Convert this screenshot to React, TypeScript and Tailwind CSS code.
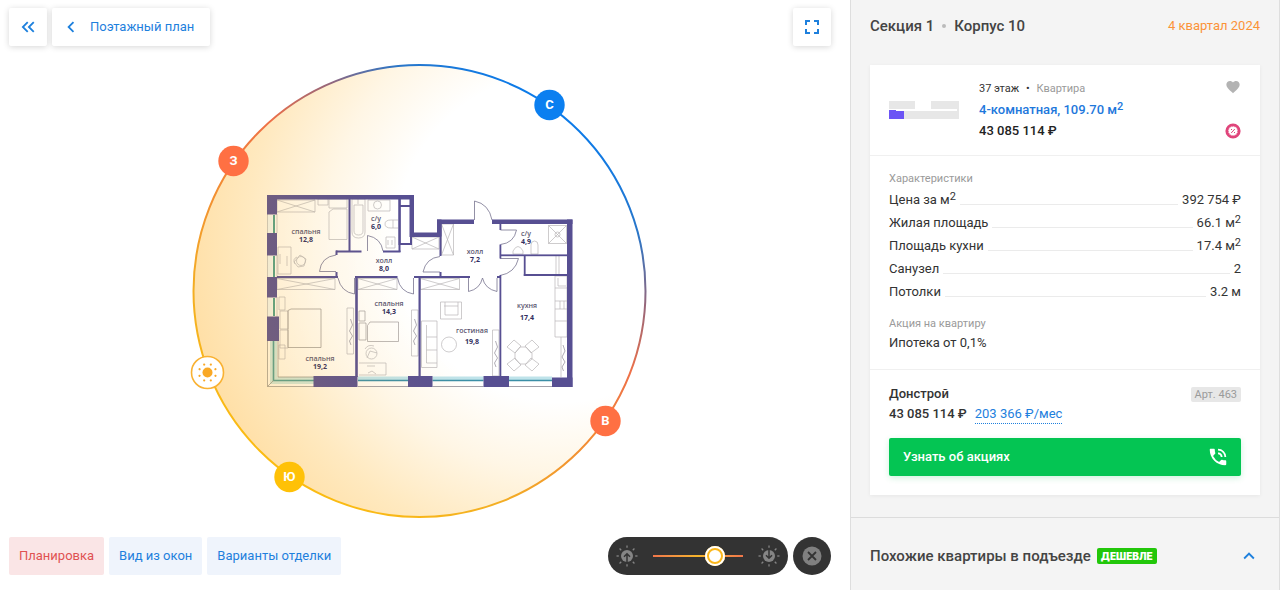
import { useState } from "react";
import {
  MdChevronLeft,
  MdFavorite,
  MdFullscreen,
  MdKeyboardArrowUp,
  MdKeyboardDoubleArrowLeft,
  MdPhoneInTalk,
} from "react-icons/md";

interface Spec {
  label: React.ReactNode;
  value: React.ReactNode;
}

const specs: Spec[] = [
  { label: <>Цена за м<Squared /></>, value: "392 754 ₽" },
  { label: "Жилая площадь", value: <>66.1 м<Squared /></> },
  { label: "Площадь кухни", value: <>17.4 м<Squared /></> },
  { label: "Санузел", value: "2" },
  { label: "Потолки", value: "3.2 м" },
];

const tabs = ["Планировка", "Вид из окон", "Варианты отделки"];

// [x, y, width, height]
const walls: number[][] = [
  // outer contour
  [267, 195, 147, 4.5],
  [267, 195, 10, 19.5],
  [267, 233, 10, 22.5],
  [267, 277, 10, 20.5],
  [267, 316.5, 12, 24.5],
  [409.5, 195, 4.5, 42],
  [410, 232.5, 31, 4.5],
  [437, 219.5, 4.5, 17],
  [437, 219.5, 37, 4.5],
  [492, 219.5, 80.5, 4.5],
  [567, 219.5, 5.5, 167.5],
  [552, 377.5, 20.5, 9.5],
  [313.5, 376, 44, 11],
  [408, 376, 24.5, 11],
  [483.5, 376, 25.5, 11],
  // inner partitions
  [348.5, 199, 2, 53],
  [398.5, 199, 2.2, 46],
  [398.5, 199, 2, 53],
  [400, 205, 10, 2],
  [399, 243, 13, 2],
  [410, 235, 2, 10],
  [336, 250.5, 25.5, 2],
  [383, 250.5, 17.5, 2],
  [335.5, 250.5, 2, 4.5],
  [335.5, 272, 2, 5],
  [277, 276, 61, 2],
  [355, 276, 42.5, 2],
  [355.2, 276, 2.6, 101],
  [418.5, 276, 2.2, 101],
  [414, 276, 56, 2],
  [439.5, 222, 2, 34],
  [439.5, 272, 2, 5],
  [499.5, 222, 1.8, 8],
  [499.5, 244.5, 1.8, 14],
  [499.5, 275, 1.8, 102],
  [497, 276, 4, 2],
  [500, 254.4, 67, 1.8],
  [523.8, 255, 1.8, 21],
  [523.8, 274, 44, 2],
];

// [x, y, width, height]
const wardrobes: number[][] = [
  [277, 200, 38, 12],
  [441.5, 224, 12, 31],
  [412, 237, 27, 12],
  [277, 278.5, 58, 11],
  [358, 278.5, 39, 11],
  [420.5, 278.5, 39, 11],
  [548.5, 225.5, 18, 18],
];

const rooms = [
  { name: "спальня", area: "12,8", x: 306, y: 234 },
  { name: "с/у", area: "6,0", x: 376, y: 221 },
  { name: "холл", area: "8,0", x: 384, y: 263 },
  { name: "спальня", area: "14,3", x: 389, y: 306 },
  { name: "спальня", area: "19,2", x: 320, y: 361 },
  { name: "холл", area: "7,2", x: 475, y: 254 },
  { name: "с/у", area: "4,9", x: 526, y: 236 },
  { name: "кухня", area: "17,4", x: 527, y: 308, gap: 12 },
  { name: "гостиная", area: "19,8", x: 472, y: 333, gap: 11 },
];

const compass = [
  { letter: "С", x: 549.5, y: 105, color: "#0b7ff0" },
  { letter: "З", x: 233.5, y: 161, color: "#ff7043" },
  { letter: "В", x: 605.5, y: 421, color: "#ff7043" },
  { letter: "Ю", x: 289.5, y: 477, color: "#ffc107" },
];

const footprint = "M267 195H414V233H437V220H572V387H267Z";

const rays = [0, 45, 90, 135, 180, 225, 270, 315];

function Squared() {
  return <sup className="top-[-4px] text-[11px] leading-none">2</sup>;
}

function FloorPlan() {
  return (
    <g>
      <path d={footprint} fill="#fff" fillOpacity="0.7" />

      {/* Furniture */}
      <g fill="none" stroke="#b9b6b8" strokeWidth="0.7">
        {wardrobes.map(([x, y, w, h]) => (
          <path
            key={`${x}-${y}`}
            d={`M${x} ${y}h${w}v${h}h${-w}zl${w} ${h}M${x + w} ${y}l${-w} ${h}`}
          />
        ))}
        <path d="M318 199h10v6h-10zM329 199h18v9h-18zM329 212l4-3h14v30.500h-18z" />
        <path d="M352 199h13v33q0 6-6.500 6t-6.500-6zM354 205v26q0 4 4.500 4t4.500-4v-26zM358 199v5" />
        <path d="M368 200h22v11h-22z" />
        <circle cx="377.500" cy="205" r="4" />
        <path d="M398 220h-7q-6 0-6 4t6 4h7M393 220v8M386 237h9v11h-9zM388 240v5M392 240v5" />
        <path d="M278 247h13v27h-13zM280 254v10M287 256v10" />
        <path d="M294 262l6-7 6 4-2 7-6 1zM297 257q-5 2-2 7" />
        <circle cx="301" cy="261" r="4.500" />
        <path d="M279 297h6v13h-6zM279 345h6v14h-6z" />
        <path d="M280 311h8v18h-8zM280 330h8v18h-8z" />
        <path d="M291 309h30v38.500h-33v-37z" stroke="#95908e" />
        <path d="M347 308h6.500v46h-6.500z" />
        <path d="M350.500 319l2 6-3 6 3 5-3 5 1.500 4" stroke="#8f8b96" />
        <path d="M411.500 310h6.500v46h-6.500z" />
        <path d="M414.500 319l2 6-3 6 3 5-3 5 1.500 4" stroke="#8f8b96" />
        <path d="M359 311h6v10h-6zM359 323h7v17h-7zM370 322h28.500v19.500h-31v-16z" stroke="#a09b9b" />
        <circle cx="371.500" cy="353.500" r="5.500" />
        <path d="M365 349q3-5 9-3M367 358l3-7 7 2M359 363h27v12h-27M367 366h8M368 373l4-2 4 3" />
        <path d="M440.500 302h21v17h-21zM445 302v13h13v-13M444 306h14" />
        <path d="M421.500 321h15.500v46.500h-15.500zM426.500 325v38h10.500M426.500 337h10.500M426.500 350h10.500" />
        <circle cx="449" cy="344.500" r="7.500" />
        <path d="M492.500 330h6.500v46h-6.500z" />
        <path d="M495.500 341l2 6-3 6 3 5-3 5 1.500 4" stroke="#8f8b96" />
        <path d="M507 347l7-7 7 6-6 7zM539 347l-7-7-7 6 6 7zM507 364l7 7 7-6-6-7zM539 364l-7 7-7-6 6-7z" />
        <path d="M520 347h6l6 6v6l-6 5h-6l-5-5v-6z" />
        <path d="M555 276h12v61h-12zM555 288h12M555 301h12M555 309h12M555 321h12M558 278v8h8M560 301v8M564 301v8M561 337v40M556 256v18M559 256v18" />
        <path d="M563 345l2 6-3 6 3 5-3 5 1.500 4" stroke="#8f8b96" />
        <circle cx="557.500" cy="234.500" r="2.500" />
        <path d="M531 254v-9q0-4 3.500-4t3.500 4v9zM513 254v-3q5-9 10 0v3z" />
      </g>

      {/* Doors */}
      <g fill="none" stroke="#77748f" strokeWidth="0.8">
        <path d="M474.500 220V201Q489 204 492 220" />
        <path d="M336 271.500H319.500Q321 257 336 255" />
        <path d="M367.500 251V235.500Q381 238 383 251" />
        <path d="M354.500 278V294Q341 292 338 278" />
        <path d="M413.500 278V294Q400 292 397.500 278" />
        <path d="M440 272H423Q426 258 440 256.500" />
        <path d="M468.500 278V291.500Q480 289 482.500 278Q485 289 497 291.500V278" />
        <path d="M500.500 230H516.500Q514 243 500.500 244.500" />
        <path d="M500 258.500H518.500Q515 273 500 275.500" />
      </g>

      {/* Windows */}
      <g fill="none">
        <path d="M270 215v18M270 256v21M270 298v18" stroke="#f1f4ee" strokeWidth="5" />
        <path d="M274 215v18M274 256v21M274 298v18" stroke="#4f9f8c" strokeWidth="2" />
        <path d="M267.500 214v19M267.500 255v22M267.500 297v20M277 214v19M277 255v22M277 297v20" stroke="#aaa" strokeWidth="0.6" />
        <path d="M273.500 341V380.500H314" stroke="#cfe6dd" strokeWidth="7" />
        <path d="M273.500 341V380.500H314" stroke="#4d9b95" strokeWidth="1.600" />
        <path d="M267.500 341V386.500H314M278 341V377H314M267.500 386.500l6-6" stroke="#8c8a86" strokeWidth="0.700" />
        <path d="M358 378.500h50M432.500 378.500h51M509 378.500h43" stroke="#bfe3ea" strokeWidth="4" />
        <path d="M358 380.500h50M432.500 380.500h51M509 380.500h43" stroke="#3b8ea6" strokeWidth="1.400" />
        <path d="M358 386.500h50M432.500 386.500h51M509 386.500h43" stroke="#8c8a96" strokeWidth="0.800" />
      </g>

      <g fill="#574f92">
        {walls.map(([x, y, w, h], i) => (
          <rect key={i} x={x} y={y} width={w} height={h} />
        ))}
      </g>

      <g
        fill="#5a5570"
        textAnchor="middle"
        className="font-['Open_Sans','Noto_Sans',sans-serif] text-[7px] font-semibold"
      >
        {rooms.map(({ name, area, x, y, gap = 8 }) => (
          <g key={`${x}-${y}`}>
            <text x={x} y={y}>{name}</text>
            <text x={x} y={y + gap} fill="#332e60" className="font-bold">{area}</text>
          </g>
        ))}
      </g>

      <path d={footprint} fill="url(#sunlight)" fillOpacity="0.6" />
    </g>
  );
}

function SunCompass() {
  return (
    <svg viewBox="184 56 472 472" className="w-full max-w-[472px]" role="img" aria-label="План квартиры">
      <defs>
        <radialGradient id="sunlight" gradientUnits="userSpaceOnUse" cx="560" cy="238" r="390">
          <stop offset="0.42" stopColor="#ffae14" stopOpacity="0" />
          <stop offset="0.6" stopColor="#ffae14" stopOpacity="0.11" />
          <stop offset="0.8" stopColor="#ffae14" stopOpacity="0.27" />
          <stop offset="1" stopColor="#ffaa14" stopOpacity="0.4" />
        </radialGradient>
        <linearGradient id="horizon" gradientUnits="userSpaceOnUse" x1="549.5" y1="105" x2="289.5" y2="477">
          <stop offset="0" stopColor="#0b7bea" />
          <stop offset="0.12" stopColor="#2a76c8" />
          <stop offset="0.24" stopColor="#96667a" />
          <stop offset="0.38" stopColor="#ee7048" />
          <stop offset="0.55" stopColor="#f28a34" />
          <stop offset="0.78" stopColor="#f3ae24" />
          <stop offset="1" stopColor="#fbbc12" />
        </linearGradient>
      </defs>

      <circle cx="419.5" cy="291" r="226" fill="url(#sunlight)" stroke="url(#horizon)" strokeWidth="2" />
      <FloorPlan />

      {compass.map(({ letter, x, y, color }) => (
        <g key={letter}>
          <circle cx={x} cy={y} r="15.2" fill={color} />
          <text
            x={x}
            y={y + 4}
            fill="#fff"
            textAnchor="middle"
            className="font-['Roboto',sans-serif] text-[13px] font-bold"
          >
            {letter}
          </text>
        </g>
      ))}

      {/* Sun position */}
      <g transform="translate(207.5 372.5)">
        <circle r="16" fill="#fff" stroke="#f9b233" strokeWidth="1.6" />
        <circle r="5" fill="#f9a825" />
        {rays.map((angle) => (
          <circle key={angle} cx="8.600" r="1.100" fill="#f9a825" transform={`rotate(${angle + 22.5})`} />
        ))}
      </g>
    </svg>
  );
}

function SunIcon({ direction }: { direction: "up" | "down" }) {
  return (
    <svg viewBox="-11 -11 22 22" className="size-[22px] shrink-0" aria-hidden="true">
      {rays.map((angle) => (
        <path key={angle} d="M8.200 0h2.300" stroke="#858585" strokeWidth="1.300" transform={`rotate(${angle})`} />
      ))}
      <circle r="6" fill="#858585" />
      <path
        d={direction === "up" ? "M0 6.500V-2M-3 0.700L0-2.300L3 0.700" : "M0-6.500V2M-3-0.700L0 2.300L3-0.700"}
        fill="none"
        stroke="#333"
        strokeWidth="1.500"
      />
    </svg>
  );
}

function Viewer() {
  const [activeTab, setActiveTab] = useState(tabs[0]);
  const [time, setTime] = useState(74);

  return (
    <main className="flex min-w-0 flex-1 flex-col pt-2 pr-[19px] pb-[15px] pl-[9px]">
      <div className="flex items-center gap-[5px] text-[#1e80dd]">
        <button aria-label="Назад" className="flex size-[38px] items-center justify-center rounded-xs bg-white shadow-[0_1px_6px_rgba(0,0,0,0.16)]">
          <MdKeyboardDoubleArrowLeft className="size-[22px]" />
        </button>
        <button className="flex h-[38px] items-center gap-2 rounded-xs bg-white pr-4 pl-2 text-[13px] shadow-[0_1px_6px_rgba(0,0,0,0.16)]">
          <MdChevronLeft className="size-[22px]" />
          Поэтажный план
        </button>
        <button aria-label="На весь экран" className="ml-auto flex size-[38px] items-center justify-center rounded-xs bg-white shadow-[0_1px_6px_rgba(0,0,0,0.16)]">
          <MdFullscreen className="size-6" />
        </button>
      </div>

      <div className="flex flex-1 items-center justify-center">
        <SunCompass />
      </div>

      <div className="flex items-center justify-between">
        <div className="flex gap-[5px]">
          {tabs.map((tab) => (
            <button
              key={tab}
              onClick={() => setActiveTab(tab)}
              className={`h-[38px] rounded-xs px-2.5 text-[13px] ${
                tab === activeTab ? "bg-[#fae5e6] text-[#e05252]" : "bg-[#eff4fc] text-[#1e80dd]"
              }`}
            >
              {tab}
            </button>
          ))}
        </div>

        <div className="flex gap-[5px]">
          <div className="flex h-[38px] w-[180px] items-center justify-between rounded-full bg-[#333] px-2">
            <SunIcon direction="up" />
            <input
              type="range"
              aria-label="Время суток"
              value={time}
              onChange={(e) => setTime(Number(e.target.value))}
              className="h-0.5 w-[90px] appearance-none bg-linear-to-r from-[#f0764a] via-[#f5b52a] to-[#f0764a] outline-none [&::-webkit-slider-thumb]:size-5 [&::-webkit-slider-thumb]:appearance-none [&::-webkit-slider-thumb]:rounded-full [&::-webkit-slider-thumb]:bg-white [&::-webkit-slider-thumb]:shadow-[inset_0_0_0_2px_#fff,inset_0_0_0_4px_#fbb71c]"
            />
            <SunIcon direction="down" />
          </div>
          <button aria-label="Закрыть" className="flex size-[38px] items-center justify-center rounded-full bg-[#333]">
            <svg viewBox="0 0 20 20" className="size-5" aria-hidden="true">
              <circle cx="10" cy="10" r="9.500" fill="#808080" />
              <path d="M6 6l8 8M14 6l-8 8" stroke="#333" strokeWidth="1.800" />
            </svg>
          </button>
        </div>
      </div>
    </main>
  );
}

function ApartmentCard() {
  return (
    <article className="bg-white text-[13px] text-[#333] shadow-[0_1px_4px_rgba(0,0,0,0.06)]">
      <div className="flex items-center border-b border-[#f0f0f0] px-[19px] py-3.5">
        <svg viewBox="0 0 70 18" className="w-[70px] shrink-0" aria-hidden="true">
          <path d="M0 0h26v8h-26zM42 0h28v18h-70v-8h68v-2h-26z" fill="#e7e7e7" />
          <path d="M0 9h7v1h8v8h-15z" fill="#6c54f5" />
        </svg>
        <div className="ml-5">
          <p className="text-[11px] leading-5">
            37 этаж <span className="mx-1">•</span> <span className="text-[#9a9a9a]">Квартира</span>
          </p>
          <a href="#apartment" className="block leading-[22px] font-medium text-[#1e78dc]">
            4-комнатная, 109.70 м<Squared />
          </a>
          <p className="leading-5 font-medium text-[#222]">43 085 114 ₽</p>
        </div>
        <div className="ml-auto flex flex-col items-center justify-between self-stretch pb-0.5">
          <button aria-label="В избранное" className="text-[#b3b3b3]">
            <MdFavorite className="size-4" />
          </button>
          <svg viewBox="0 0 16 16" className="size-4" aria-hidden="true">
            <circle cx="8" cy="8" r="6.200" fill="#fff" stroke="#e0457b" strokeWidth="2.800" />
            <circle cx="8" cy="8" r="4.600" fill="none" stroke="#e0457b" strokeWidth="0.800" strokeDasharray="1 1.200" />
            <path d="M6.200 10l3.600-4M6 6.500h1M9 9.500h1" stroke="#e0457b" strokeWidth="1" />
          </svg>
        </div>
      </div>

      <div className="border-b border-[#f0f0f0] px-[19px] pt-3.5 pb-4">
        <h3 className="text-[11px] leading-[18px] text-[#9a9a9a]">Характеристики</h3>
        <dl>
          {specs.map(({ label, value }, i) => (
            <div key={i} className="flex h-[23px] items-center gap-1">
              <dt>{label}</dt>
              <span className="h-2.5 flex-1 border-b border-[#ebebeb]" />
              <dd>{value}</dd>
            </div>
          ))}
        </dl>
        <h3 className="mt-3 text-[11px] leading-[18px] text-[#9a9a9a]">Акция на квартиру</h3>
        <p className="leading-5">Ипотека от 0,1%</p>
      </div>

      <div className="px-[19px] pt-3.5 pb-[19px]">
        <div className="flex items-center justify-between">
          <h3 className="leading-5 font-medium">Донстрой</h3>
          <span className="rounded-xs bg-[#e7e7e7] px-1 text-[11px] leading-[15px] text-[#9a9a9a]">Арт. 463</span>
        </div>
        <p className="flex items-center gap-2 leading-5 font-medium">
          43 085 114 ₽
          <a href="#mortgage" className="border-b border-dotted border-[#1e80dd] leading-[18px] font-normal text-[#1e80dd]">
            203 366 ₽/мес
          </a>
        </p>
        <button className="mt-3.5 flex h-[38px] w-full items-center justify-between rounded-xs bg-[#04c553] pr-3 pl-3.5 font-medium text-white shadow-[0_2px_6px_rgba(4,197,83,0.2)]">
          Узнать об акциях
          <MdPhoneInTalk className="size-[22px]" />
        </button>
      </div>
    </article>
  );
}

export default function App() {
  return (
    <div className="flex min-h-screen bg-white font-['Roboto','Noto_Sans',sans-serif]">
      <Viewer />

      <aside className="w-[430px] shrink-0 border-x border-[#dedede] bg-[#f4f4f4] text-[#444]">
        <div className="px-[19px] pb-[22px]">
          <header className="mb-[13px] flex h-[52px] items-center justify-between">
            <h1 className="flex items-center gap-2 text-[15px] font-medium">
              Секция 1
              <span className="size-1 rounded-full bg-[#bbb]" />
              Корпус 10
            </h1>
            <span className="text-[13px] text-[#fb9338]">4 квартал 2024</span>
          </header>
          <ApartmentCard />
        </div>

        <button className="flex w-full items-center border-t border-[#dcdcdc] px-[19px] pt-[26px] pb-[22px] text-[15px] leading-6 font-medium">
          Похожие квартиры в подъезде
          <span className="ml-1.5 rounded-xs bg-[#22c70a] px-1 font-['Inter',sans-serif] text-[10px] leading-4 font-black text-white">
            ДЕШЕВЛЕ
          </span>
          <MdKeyboardArrowUp className="ml-auto size-[22px] text-[#1e80dd]" />
        </button>
      </aside>
    </div>
  );
}
